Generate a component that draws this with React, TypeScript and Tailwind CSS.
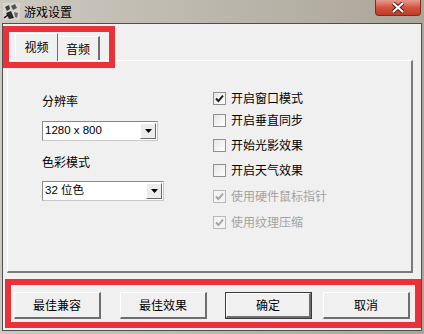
import React from "react";

const cjk = "font-['Microsoft_YaHei','Noto_Sans_CJK_SC',sans-serif]";

function Checkbox({ checked, disabled, label }: { checked?: boolean; disabled?: boolean; label: string }) {
  return (
    <div className="flex items-center h-[16px]">
      <div
        className={
          "w-[13px] h-[13px] border flex items-center justify-center " +
          (disabled ? "border-[#b8b8b8] bg-[#f4f4f4]" : "border-[#8e8f8f] bg-gradient-to-br from-[#e6e6e6] to-white")
        }
      >
        {checked && (
          <svg width="9" height="9" viewBox="0 0 9 9">
            <path
              d="M1 4.5 L3.4 7 L8 1.6"
              fill="none"
              stroke={disabled ? "#a2a2a2" : "#1c1c1c"}
              strokeWidth="1.9"
            />
          </svg>
        )}
      </div>
      <span className={"ml-[5px] text-[12px] leading-[16px] " + (disabled ? "text-[#a3a3a3]" : "text-black")}>{label}</span>
    </div>
  );
}

function Select({ value, width }: { value: string; width: string }) {
  return (
    <div className={"h-[20px] flex border-t border-l border-t-[#8a8a8a] border-l-[#8a8a8a] border-b border-r border-b-[#c8c8c8] border-r-[#c8c8c8] bg-white " + width}>
      <div className="flex-1 flex items-center pl-[2px] text-[11.5px] text-black font-['Liberation_Sans','Noto_Sans_CJK_SC',sans-serif] leading-none">
        {value}
      </div>
      <div className="m-[1px] w-[16px] flex items-center justify-center bg-[#ececec] border-t border-l border-t-white border-l-white border-b border-r border-b-[#6a6a6a] border-r-[#6a6a6a]">
        <svg width="7" height="4" viewBox="0 0 7 4">
          <path d="M0 0 H7 L3.5 4 Z" fill="#000" />
        </svg>
      </div>
    </div>
  );
}

function Button({ label, primary }: { label: string; primary?: boolean }) {
  return (
    <div className={"h-[27px] " + (primary ? "border border-[#3a3a3a]" : "")}>
      <div
        className={
          "h-full flex items-center justify-center bg-[#f0f0f0] text-[12px] text-black border-t border-l border-t-white border-l-white border-b-2 border-r-2 border-b-[#6e6e6e] border-r-[#6e6e6e] " +
          (primary ? "w-[85px]" : "w-[87px]")
        }
      >
        {label}
      </div>
    </div>
  );
}

export default function App() {
  return (
    <div className={"relative w-[424px] h-[334px] overflow-hidden bg-gradient-to-r from-[#cdc9c1] via-[#bcb7ac] to-[#aba699] " + cjk}>
      {/* Title bar */}
      <div className="h-[23px] flex items-start">
        <div className="ml-[3px] mt-[3px] w-[17px] h-[17px]">
          <svg width="17" height="17" viewBox="0 0 17 17">
            <rect x="0" y="0" width="17" height="17" fill="#d9d6d0" />
            <path d="M2 4 L6 2 L7 6 L4 8 Z" fill="#3b3b3b" />
            <path d="M8 3 L12 1 L14 5 L10 7 Z" fill="#555" />
            <path d="M3 10 L8 8 L11 15 L6 16 Z" fill="#2a2a2a" />
            <path d="M11 9 L15 10 L14 15 L12 14 Z" fill="#6a6a6a" />
            <path d="M1 15 L5 12" stroke="#111" strokeWidth="1.5" />
          </svg>
        </div>
        <div className="ml-[4px] mt-[4px] text-[12px] leading-[16px] text-black">游戏设置</div>
        <div className="flex-1" />
        <div className="mr-[3px] w-[46px] h-[16px] rounded-b-[4px] border border-t-0 border-[#7a2c22] bg-gradient-to-b from-[#e79a8c] via-[#d2533e] to-[#c23a24] flex items-center justify-center">
          <svg width="14" height="11" viewBox="0 0 14 11">
            <path d="M2 1 L12 10 M12 1 L2 10" stroke="#4a1a12" strokeWidth="4" />
            <path d="M2 1 L12 10 M12 1 L2 10" stroke="#fff" strokeWidth="2.2" />
          </svg>
        </div>
      </div>

      {/* Client area */}
      <div className="ml-[2px] mr-[2px] h-[308px] border border-[#4f4f4f] bg-[#f0f0f0] flex flex-col">
        <div className="pl-[4px] pt-[9px]">
          {/* Tabs */}
          <div className="flex items-end h-[27px] pl-[8px]">
            <div className="relative z-10 w-[43px] h-[28px] -mb-[1px] bg-[#f0f0f0] border-t border-l border-t-white border-l-white border-r border-r-[#6e6e6e] flex items-center justify-center text-[12px] text-black pb-[2px]">
              视频
            </div>
            <div className="w-[42px] h-[24px] bg-[#f0f0f0] border-t border-t-white border-r-2 border-r-[#6e6e6e] flex items-center justify-center text-[12px] text-black">
              音频
            </div>
          </div>
          {/* Panel */}
          <div className="w-[406px] h-[213px] border-t border-l border-t-white border-l-white border-r-2 border-b-2 border-r-[#7a7a7a] border-b-[#7a7a7a] flex pt-[32px] pl-[34px]">
            <div className="w-[171px] flex flex-col">
              <div className="text-[12px] leading-[16px] text-black">分辨率</div>
              <div className="mt-[12px]">
                <Select value="1280 x 800" width="w-[116px]" />
              </div>
              <div className="mt-[13px] text-[12px] leading-[16px] text-black">色彩模式</div>
              <div className="mt-[11px]">
                <Select value="32 位色" width="w-[122px]" />
              </div>
            </div>
            <div className="flex flex-col -mt-[3px]">
              <Checkbox checked label="开启窗口模式" />
              <div className="mt-[6px]">
                <Checkbox label="开启垂直同步" />
              </div>
              <div className="mt-[9px]">
                <Checkbox label="开始光影效果" />
              </div>
              <div className="mt-[9px]">
                <Checkbox label="开启天气效果" />
              </div>
              <div className="mt-[10px]">
                <Checkbox checked disabled label="使用硬件鼠标指针" />
              </div>
              <div className="mt-[10px]">
                <Checkbox checked disabled label="使用纹理压缩" />
              </div>
            </div>
          </div>
        </div>
        {/* Buttons */}
        <div className="flex mt-[19px] pl-[11px]">
          <Button label="最佳兼容" />
          <div className="ml-[19px]">
            <Button label="最佳效果" />
          </div>
          <div className="ml-[18px]">
            <Button label="确定" primary />
          </div>
          <div className="ml-[11px]">
            <Button label="取消" />
          </div>
        </div>
      </div>

      {/* Red annotation boxes */}
      <div className="absolute left-[3px] top-[26px] w-[112px] h-[42px] border-[6px] border-[#ea3038]" />
      <div className="absolute left-[5px] top-[279px] w-[416px] h-[49px] border-[6px] border-[#ea3038]" />
    </div>
  );
}
